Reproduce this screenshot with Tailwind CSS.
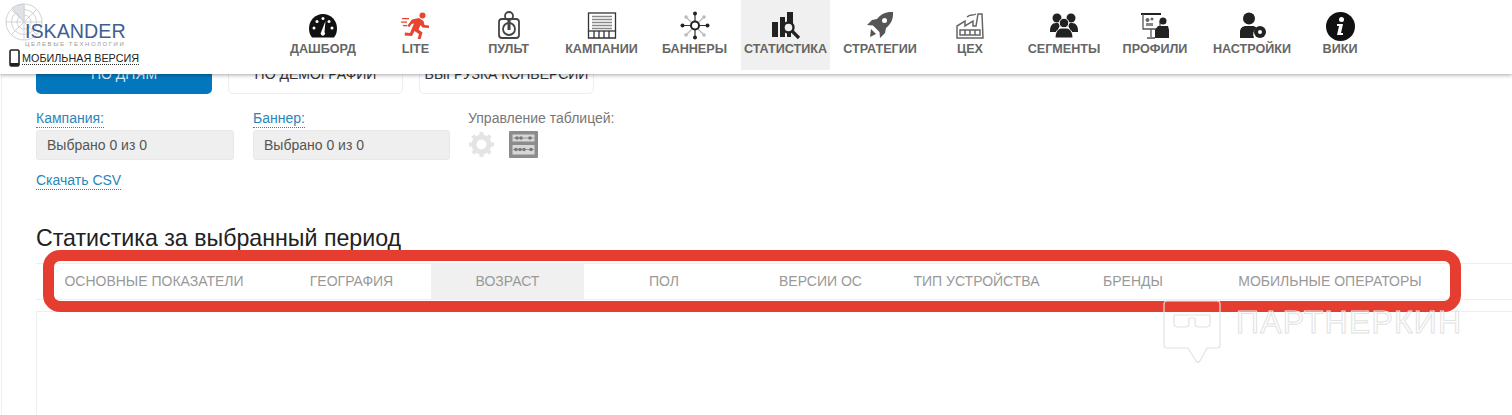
<!DOCTYPE html>
<html lang="ru">
<head>
<meta charset="UTF-8" />
<title>Iskander · Статистика</title>
<script src="https://cdn.jsdelivr.net/npm/@tailwindcss/browser@4"></script>
</head>
<body class="relative h-[415px] overflow-hidden bg-white font-['Liberation_Sans',Arial,sans-serif]">

<!-- ШАПКА -->
<header class="relative z-10 flex h-[74px] bg-white shadow-[0_1px_4px_rgba(0,0,0,0.35)]">
  <div class="w-[277px] shrink-0 pl-[5px] pt-[3px]">
    <div class="relative h-[44px]">
      <svg class="absolute left-0 top-0 h-[38px] w-[38px]" viewBox="0 0 38 38" fill="none" stroke="#cfd3d8" stroke-width="1">
        <circle cx="19" cy="19" r="18"/><circle cx="19" cy="19" r="12.5"/><circle cx="19" cy="19" r="7"/>
        <path d="M1 19h36M19 1v36M6 6l26 26M32 6L6 32"/><path d="M19 19L7 5a18 18 0 0 1 12-4z" fill="#dfe2e6"/>
      </svg>
      <div class="absolute left-[20px] top-[17px] text-[19.7px] leading-[23px] text-[#3f5f90]">ISKANDER</div>
      <div class="absolute left-[20px] top-[38px] w-[100px] whitespace-nowrap text-[6px] leading-[7px] tracking-[1.55px] text-[#9a9a9a]">ЦЕЛЕВЫЕ ТЕХНОЛОГИИ</div>
    </div>
    <div class="flex items-center pl-[4px] pt-[2px]">
      <svg class="h-[18px] w-[11px]" viewBox="0 0 11 18"><rect x="1" y="1" width="9" height="16" rx="1.5" fill="none" stroke="#222" stroke-width="1.6"/><rect x="1" y="14" width="9" height="3" fill="#222"/></svg>
      <span class="ml-[2px] border-b border-dotted border-[#333] text-[10.8px] leading-[12px] text-[#222]">МОБИЛЬНАЯ ВЕРСИЯ</span>
    </div>
  </div>

  <nav class="flex h-[70px] text-[12.6px] font-bold text-[#666]">
    <a class="flex w-[92px] flex-col items-center pt-[13px]">
      <svg class="h-[26px] w-[30px]" viewBox="0 0 30 26"><path d="M15 1C7 1 1 7.500 1 15.500c0 3.500 1 6.500 3 9h22c2-2.500 3-5.500 3-9C29 7.500 23 1 15 1z" fill="#111"/><g fill="#fff"><circle cx="6" cy="15" r="1.500"/><circle cx="9" cy="8.500" r="1.500"/><circle cx="15" cy="5.500" r="1.500"/><circle cx="21" cy="8.500" r="1.500"/><circle cx="24" cy="15" r="1.500"/><path d="M17.500 8l-1 11a2.200 2.200 0 1 1-3.300 0z"/></g></svg>
      <span class="mt-[3px] leading-[14px]">ДАШБОРД</span>
    </a>
    <a class="flex w-[93px] flex-col items-center pt-[12px]">
      <svg class="h-[27px] w-[30px]" viewBox="0 0 30 27" fill="#e8442f"><circle cx="21.500" cy="3.500" r="3"/><path d="M11 7.500l7-1.500 4.500 3 1 4 4.500 .5v2.500l-6.500-.5-2-2.500-2 4.500 4 3-2 7h-3l1.500-5.500-4.500-3-2.500 5-7.500-.5.500-3 5 .5 4-9.500-2.500.5-2 3-2.300-1z"/><path d="M1 6h7v1.200H1zM0 9.500h6v1.200H0zM2 13h4v1.200H2z"/></svg>
      <span class="mt-[3px] leading-[14px]">LITE</span>
    </a>
    <a class="flex w-[93px] flex-col items-center pt-[11px]">
      <svg class="h-[28px] w-[30px]" viewBox="0 0 30 28" fill="none" stroke="#444" stroke-width="1.800"><circle cx="15" cy="5" r="4"/><rect x="5" y="8" width="20" height="19" rx="3"/><circle cx="15" cy="18" r="6"/><path d="M15 9v10" stroke-width="3"/></svg>
      <span class="mt-[3px] leading-[14px]">ПУЛЬТ</span>
    </a>
    <a class="flex w-[93px] flex-col items-center pt-[12px]">
      <svg class="h-[27px] w-[30px]" viewBox="0 0 30 27" fill="none" stroke="#333" stroke-width="1.300"><rect x="1.500" y="1" width="27" height="18"/><path d="M5 4.500h20M5 7.500h20M5 10.500h20M5 13.500h20M5 16.500h20" stroke="#888" stroke-width="1.500"/><path d="M1.500 19v7h27v-7M7 19v7M12 19v7M17 19v7M22 19v7"/></svg>
      <span class="mt-[3px] leading-[14px]">КАМПАНИИ</span>
    </a>
    <a class="flex w-[93px] flex-col items-center pt-[11px]">
      <svg class="h-[29px] w-[30px]" viewBox="0 0 30 29" fill="#222"><path d="M6 6l18 18M24 6L6 24" stroke="#bbb" stroke-width="1.300"/><path d="M2 14.500h26M15 2v25" stroke="#333" stroke-width="1.200"/><circle cx="15" cy="2.500" r="2"/><circle cx="15" cy="26.500" r="2"/><circle cx="2.500" cy="14.500" r="2"/><circle cx="27.500" cy="14.500" r="2"/><circle cx="6" cy="6" r="1.800" fill="#bbb"/><circle cx="24" cy="6" r="1.800" fill="#bbb"/><circle cx="6" cy="24" r="1.800" fill="#bbb"/><circle cx="24" cy="24" r="1.800" fill="#bbb"/><circle cx="15" cy="14.500" r="4" fill="#fff" stroke="#222" stroke-width="2"/></svg>
      <span class="mt-[2px] leading-[14px]">БАННЕРЫ</span>
    </a>
    <a class="flex w-[89px] flex-col items-center bg-[#f0f0f0] pt-[11px]">
      <svg class="h-[29px] w-[30px]" viewBox="0 0 30 29" fill="#222"><rect x="1" y="11" width="6" height="15"/><rect x="9" y="6" width="5" height="20"/><rect x="16" y="1" width="6" height="12"/><rect x="16" y="22" width="4" height="4"/><circle cx="17.500" cy="16.500" r="5" fill="#f0f0f0" stroke="#222" stroke-width="2.400"/><path d="M21 20l7 7" stroke="#222" stroke-width="3.200"/></svg>
      <span class="mt-[2px] leading-[14px]">СТАТИСТИКА</span>
    </a>
    <a class="flex w-[100px] flex-col items-center pt-[11px]">
      <svg class="h-[28px] w-[28px]" viewBox="0 0 28 28" fill="#555"><path d="M27 1c-7-.5-12 2-16 7l-5 1-5 5 6 .5 6.500 6.500.5 6 5-5 1-5c5-4 7.500-9 7-16z"/><circle cx="18.500" cy="9.500" r="2.500" fill="#fff"/><path d="M5 18l5 5-6 3z"/></svg>
      <span class="mt-[3px] leading-[14px]">СТРАТЕГИИ</span>
    </a>
    <a class="flex w-[80px] flex-col items-center pt-[11px]">
      <svg class="h-[28px] w-[30px]" viewBox="0 0 30 28" fill="none" stroke="#666" stroke-width="1.500"><path d="M2 27V15l8-5v5l8-5v5h3l2-12h4l1 24z"/><path d="M12 6c3-3 6-1 9-3" /><path d="M5 19h20v5H5z"/><path d="M10 19v5M15 19v5M20 19v5"/></svg>
      <span class="mt-[3px] leading-[14px]">ЦЕХ</span>
    </a>
    <a class="flex w-[108px] flex-col items-center pt-[12px]">
      <svg class="h-[27px] w-[30px]" viewBox="0 0 30 27" fill="#222"><circle cx="8" cy="6" r="4.500"/><circle cx="22" cy="6" r="4.500"/><path d="M1 19c0-5 2-8 6-8h2l2 2-3 7H1zM29 19c0-5-2-8-6-8h-2l-2 2 3 7h7z"/><circle cx="15" cy="11" r="4.800" stroke="#fff" stroke-width="1"/><path d="M6 26c0-6 3-10 7-10h4c4 0 7 4 7 10z" stroke="#fff" stroke-width="1"/></svg>
      <span class="mt-[3px] leading-[14px]">СЕГМЕНТЫ</span>
    </a>
    <a class="flex w-[74px] flex-col items-center pt-[12px]">
      <svg class="h-[27px] w-[30px]" viewBox="0 0 30 27" fill="#222"><path d="M1 2h20" stroke="#222" stroke-width="2"/><path d="M3 2v15h17V9" fill="none" stroke="#555" stroke-width="1.300"/><path d="M11 17v8M7 26h8" stroke="#555" stroke-width="1.300"/><circle cx="7.500" cy="8" r="2" fill="#666"/><circle cx="12" cy="7" r="1.500" fill="#666"/><rect x="6" y="11" width="7" height="3" fill="#888"/><circle cx="23" cy="9" r="3.500"/><path d="M18 14h10l1 4H15z"/><rect x="15" y="18" width="14" height="8"/></svg>
      <span class="mt-[3px] leading-[14px]">ПРОФИЛИ</span>
    </a>
    <a class="flex w-[120px] flex-col items-center pt-[12px]">
      <svg class="h-[27px] w-[30px]" viewBox="0 0 30 27" fill="#222"><circle cx="12" cy="6.500" r="6"/><path d="M3 26v-6c0-4 3-6 6-6h6c2 0 3.500.5 4.500 2a8 8 0 0 0-2.500 10z"/><circle cx="23" cy="20" r="6"/><circle cx="23" cy="20" r="2" fill="#fff"/></svg>
      <span class="mt-[3px] leading-[14px]">НАСТРОЙКИ</span>
    </a>
    <a class="flex w-[56px] flex-col items-center pt-[12px]">
      <svg class="h-[29px] w-[29px]" viewBox="0 0 29 29"><circle cx="14.500" cy="14.500" r="14.500" fill="#111"/><circle cx="15.500" cy="7.500" r="2.500" fill="#fff"/><path d="M11 12h6l-2 9h2v2h-6l2-9h-2z" fill="#fff"/></svg>
      <span class="mt-[1px] leading-[14px]">ВИКИ</span>
    </a>
  </nav>
</header>

<!-- КОНТЕНТ -->
<main class="-mt-[20px] ml-px border-l border-[#f0f0f0] pl-[34px]">
  <div class="flex gap-4 text-[14px]">
    <button class="h-[40px] w-[176px] rounded-[5px] bg-[#0277bd] text-[#d9ecf7]">ПО ДНЯМ</button>
    <button class="h-[40px] w-[175px] rounded-[5px] border border-[#eeeeee] text-[#333]">ПО ДЕМОГРАФИИ</button>
    <button class="h-[40px] w-[175px] rounded-[5px] border border-[#eeeeee] text-[#333]">ВЫГРУЗКА КОНВЕРСИИ</button>
  </div>

  <div class="mt-[16px] flex text-[14px]">
    <div class="w-[217px]">
      <span class="block w-fit border-b border-dotted border-[#2a86b8] leading-[17px] text-[#2a86b8]">Кампания:</span>
      <div class="mt-[2px] flex h-[30px] w-[198px] items-center rounded-[3px] border border-[#e8e8e8] bg-[#efefef] pl-[10px] pt-px text-[#555]">Выбрано 0 из 0</div>
    </div>
    <div class="w-[215px]">
      <span class="block w-fit border-b border-dotted border-[#2a86b8] leading-[17px] text-[#2a86b8]">Баннер:</span>
      <div class="mt-[2px] flex h-[30px] w-[197px] items-center rounded-[3px] border border-[#e8e8e8] bg-[#efefef] pl-[10px] pt-px text-[#555]">Выбрано 0 из 0</div>
    </div>
    <div>
      <span class="block leading-[17px] text-[#777]">Управление таблицей:</span>
      <div class="mt-[4px] flex items-center gap-[14px]">
        <svg class="h-[27px] w-[27px]" viewBox="0 0 27 27" fill="none" stroke="#e4e4e4"><circle cx="13.500" cy="13.500" r="7.500" stroke-width="5"/><path d="M13.500 1v5M13.500 21v5M1 13.500h5M21 13.500h5M4.700 4.700l3.500 3.500M18.800 18.800l3.500 3.500M22.300 4.700l-3.500 3.500M8.200 18.800l-3.500 3.500" stroke-width="4"/></svg>
        <svg class="h-[27px] w-[29px]" viewBox="0 0 29 27"><rect width="29" height="27" rx="1" fill="#8c8c8c"/><rect x="3.500" y="3.500" width="22" height="7" fill="#d8d8d8"/><rect x="3.500" y="14" width="22" height="9.500" fill="#d8d8d8"/><path d="M4 7h21M4 18.500h21" stroke="#999"/><g fill="#777"><circle cx="8" cy="7" r="1.800"/><circle cx="12" cy="7" r="1.800"/><circle cx="21" cy="7" r="1.800"/><circle cx="7" cy="18.500" r="1.800"/><circle cx="11" cy="18.500" r="1.800"/><circle cx="15" cy="18.500" r="1.800"/><circle cx="22" cy="18.500" r="1.800"/></g></svg>
      </div>
    </div>
  </div>

  <a class="mt-[12px] block w-fit border-b border-dotted border-[#2a86b8] text-[14px] leading-[17px] text-[#2a86b8]">Скачать CSV</a>

  <h2 class="mt-[34px] text-[23.2px] leading-[28px] text-[#222]">Статистика за выбранный период</h2>

  <div class="mt-[11px] flex h-[37px] items-stretch border-y border-[#eeeeee] text-[14px] text-[#999]">
    <a class="flex w-[236px] items-center justify-center">ОСНОВНЫЕ ПОКАЗАТЕЛИ</a>
    <a class="flex w-[159px] items-center justify-center">ГЕОГРАФИЯ</a>
    <a class="flex w-[153px] items-center justify-center bg-[#f0f0f0]">ВОЗРАСТ</a>
    <a class="flex w-[160px] items-center justify-center">ПОЛ</a>
    <a class="flex w-[153px] items-center justify-center">ВЕРСИИ ОС</a>
    <a class="flex w-[159px] items-center justify-center">ТИП УСТРОЙСТВА</a>
    <a class="flex w-[154px] items-center justify-center">БРЕНДЫ</a>
    <a class="flex w-[240px] items-center justify-center">МОБИЛЬНЫЕ ОПЕРАТОРЫ</a>
  </div>

  <div class="mt-[11px] h-[120px] border-l border-t border-[#eeeeee]"></div>
</main>

<!-- Красная рамка поверх вкладок -->
<div class="absolute left-[43px] top-[250px] h-[62px] w-[1418px] rounded-[17px] border-[11px] border-[#e53e30]"></div>

<!-- Водяной знак -->
<div class="absolute left-[1163px] top-[300px] flex items-start gap-[15px]">
  <svg class="h-[63px] w-[58px]" viewBox="0 0 58 63" fill="none" stroke="#e2e2e2" stroke-width="1.200"><path d="M4 1h50a3 3 0 0 1 3 3v41a3 3 0 0 1-3 3H44L37 61q-2 2-4 0L25 48H4a3 3 0 0 1-3-3V4a3 3 0 0 1 3-3z"/><path d="M11 15h36M11 15v8q0 4 4 4h7q4 0 4-4v-5h6v5q0 4 4 4h7q4 0 4-4v-8"/></svg>
  <span class="mt-[4px] whitespace-nowrap text-[32px] leading-[36px] tracking-[1.2px] text-transparent [-webkit-text-stroke:1px_#e2e2e2]">ПАРТНЕРКИН</span>
</div>

</body>
</html>
